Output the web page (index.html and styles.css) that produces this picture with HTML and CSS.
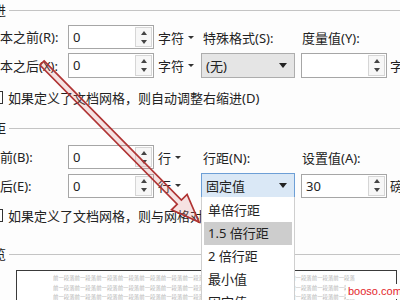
FILE: index.html
```html
<!DOCTYPE html>
<html lang="zh-CN">
<head>
<meta charset="utf-8">
<title>段落</title>
<link rel="stylesheet" href="styles.css">
</head>
<body>
<div class="dialog">
  <div class="section-head"><span class="sh-text">缩进</span><span class="sh-line"></span></div>

  <div class="row r1">
    <span class="label">文本之前(R):</span>
    <div class="spin"><span class="val">0</span><span class="spinbtn"><i class="up"></i><i class="dn"></i></span></div>
    <span class="unit">字符<i class="caret"></i></span>
    <span class="label2">特殊格式(S):</span>
    <span class="label3">度量值(Y):</span>
    <span></span>
  </div>

  <div class="row r2">
    <span class="label">文本之后(X):</span>
    <div class="spin"><span class="val">0</span><span class="spinbtn"><i class="up"></i><i class="dn"></i></span></div>
    <span class="unit">字符<i class="caret"></i></span>
    <div class="combo"><span class="ctext">(无)</span><i class="carr"></i></div>
    <div class="spin"><span class="val"></span><span class="spinbtn"><i class="up"></i><i class="dn"></i></span></div>
    <span class="unit-r">字符</span>
  </div>

  <div class="check r3"><span class="box"></span><span>如果定义了文档网格，则自动调整右缩进(D)</span></div>

  <div class="section-head s2"><span class="sh-text">间距</span><span class="sh-line"></span></div>

  <div class="row r4">
    <span class="label">段前(B):</span>
    <div class="spin"><span class="val">0</span><span class="spinbtn"><i class="up"></i><i class="dn"></i></span></div>
    <span class="unit">行<i class="caret"></i></span>
    <span class="label2">行距(N):</span>
    <span class="label3">设置值(A):</span>
    <span></span>
  </div>

  <div class="row r5">
    <span class="label">段后(E):</span>
    <div class="spin"><span class="val">0</span><span class="spinbtn"><i class="up"></i><i class="dn"></i></span></div>
    <span class="unit">行<i class="caret"></i></span>
    <div class="combo active">
      <span class="ctext">固定值</span><i class="carr"></i>
      <ul class="menu">
        <li>单倍行距</li>
        <li class="hl">1.5 倍行距</li>
        <li>2 倍行距</li>
        <li>最小值</li>
        <li>固定值</li>
      </ul>
    </div>
    <div class="spin"><span class="val">30</span><span class="spinbtn"><i class="up"></i><i class="dn"></i></span></div>
    <span class="unit-r">磅</span>
  </div>

  <div class="check r6"><span class="box"></span><span>如果定义了文档网格，则与网格对齐(W)</span></div>

  <div class="section-head s3"><span class="sh-text">预览</span><span class="sh-line"></span></div>

  <div class="preview">
    <p>前一段落前一段落前一段落前一段落前一段落前一段落前一段落前一段落前一段落前一段落前一段落前一段落前一段落前一段落</p>
    <p>前一段落前一段落前一段落前一段落前一段落前一段落前一段落前一段落前一段落前一段落前一段落前一段落前一段落前一段落</p>
    <p>前一段落前一段落前一段落前一段落前一段落前一段落前一段落前一段落前一段落前一段落前一段落前一段落前一段落前一段落</p>
  </div>
</div>

<svg class="arrow" width="400" height="300" viewBox="0 0 400 300">
  <polygon points="44.1,60.9 181.4,200 187.1,194.4 199,222 171.5,209.8 177.2,204.2 39.9,65.1"/>
</svg>
<div class="watermark">booso.com</div>
</body>
</html>
```

FILE: styles.css
```css
html, body {
  margin: 0;
  padding: 0;
}
body {
  width: 400px;
  height: 300px;
  overflow: hidden;
  position: relative;
  background: #fdfdfd;
  font-family: "Noto Sans", "Noto Sans CJK SC", sans-serif;
  font-size: 13px;
  color: #222;
}
.dialog {
  margin-left: -20px;
  width: 440px;
}
.section-head {
  display: flex;
  align-items: center;
  height: 20px;
}
.sh-text {
  line-height: 20px;
  white-space: nowrap;
}
.sh-line {
  flex: 1;
  height: 1px;
  background: #c4c4c4;
  margin-left: 3px;
}
.s2 { margin-top: 12px; }
.s3 { margin-top: 20px; }

.row {
  display: grid;
  grid-template-columns: 88px 86px 47px 100px 86px 1fr;
  align-items: center;
  height: 24px;
}
.r1 { margin-top: 5px; }
.r2 { margin-top: 4px; height: 25px; }
.r4 { margin-top: 7px; }
.r5 { margin-top: 4px; }

.label {
  padding-left: 7px;
  white-space: nowrap;
  line-height: 20px;
}
.label2 {
  padding-left: 2px;
  white-space: nowrap;
}
.label3 {
  padding-left: 1px;
  white-space: nowrap;
}
.spin {
  display: flex;
  align-items: stretch;
  box-sizing: border-box;
  height: 24px;
  border: 1px solid #a6a6a6;
  background: #fff;
}
.r2 .spin { height: 25px; }
.val {
  flex: 1;
  padding-left: 4px;
  line-height: 22px;
}
.spinbtn {
  width: 15px;
  margin: 1px 1px 1px 0;
  border: 1px solid #d6d6d6;
  background: #f7f7f7;
  display: flex;
  flex-direction: column;
  align-items: center;
  justify-content: space-around;
}
.up, .dn {
  display: block;
  width: 0;
  height: 0;
  border-left: 3px solid transparent;
  border-right: 3px solid transparent;
}
.up { border-bottom: 4px solid #444; }
.dn { border-top: 4px solid #444; }

.unit {
  padding-left: 4px;
  white-space: nowrap;
  display: flex;
  align-items: center;
}
.caret {
  display: inline-block;
  width: 0;
  height: 0;
  margin-left: 4px;
  border-left: 3px solid transparent;
  border-right: 3px solid transparent;
  border-top: 3px solid #333;
}
.unit-r {
  padding-left: 3px;
  white-space: nowrap;
}

.combo {
  position: relative;
  box-sizing: border-box;
  width: 94px;
  height: 25px;
  border: 1px solid #adadad;
  background: #e5e5e5;
  display: flex;
  align-items: center;
}
.combo.active {
  height: 25px;
  border-color: #6d9fd6;
  background: #dae8f6;
}
.ctext {
  flex: 1;
  padding-left: 4px;
}
.carr {
  display: block;
  width: 0;
  height: 0;
  margin-right: 7px;
  border-left: 4px solid transparent;
  border-right: 4px solid transparent;
  border-top: 5px solid #222;
}
.menu {
  position: absolute;
  top: 23px;
  left: -1px;
  width: 94px;
  box-sizing: border-box;
  margin: 0;
  padding: 2px 0 0;
  list-style: none;
  background: #fff;
  border: 1px solid #cfcfcf;
  border-top: none;
  z-index: 2;
}
.menu li {
  height: 23px;
  line-height: 23px;
  margin: 0 2px;
  padding-left: 4px;
  white-space: nowrap;
  font-size: 13px;
}
.menu li.hl {
  background: #cdcdcd;
}

.check {
  display: flex;
  align-items: center;
  height: 18px;
  padding-left: 10px;
  gap: 5px;
  white-space: nowrap;
}
.r3 { margin-top: 10px; }
.r6 { margin-top: 9px; }
.box {
  display: block;
  width: 11px;
  height: 11px;
  border: 1px solid #333;
  background: #fff;
}

.preview {
  margin-top: 6px;
  margin-left: 36px;
  width: 381px;
  height: 40px;
  box-sizing: border-box;
  border: 1px solid #3a3a3a;
  background: #fff;
  padding: 3px 0 0 36px;
  overflow: hidden;
}
.preview p {
  margin: 0;
  width: 302px;
  overflow: hidden;
  white-space: nowrap;
  font-size: 5.4px;
  line-height: 9.5px;
  color: #b5b5b5;
}

.arrow {
  position: absolute;
  left: 0;
  top: 0;
  z-index: 5;
}
.arrow polygon {
  fill: rgba(225, 130, 130, 0.22);
  stroke: #b03434;
  stroke-width: 1.7;
  stroke-linejoin: miter;
}
.watermark {
  position: absolute;
  left: 346px;
  top: 284px;
  padding: 0 2px;
  background: #fff;
  color: #e3262b;
  font-family: "Liberation Sans", sans-serif;
  font-size: 11px;
  line-height: 15px;
  z-index: 6;
}
```
